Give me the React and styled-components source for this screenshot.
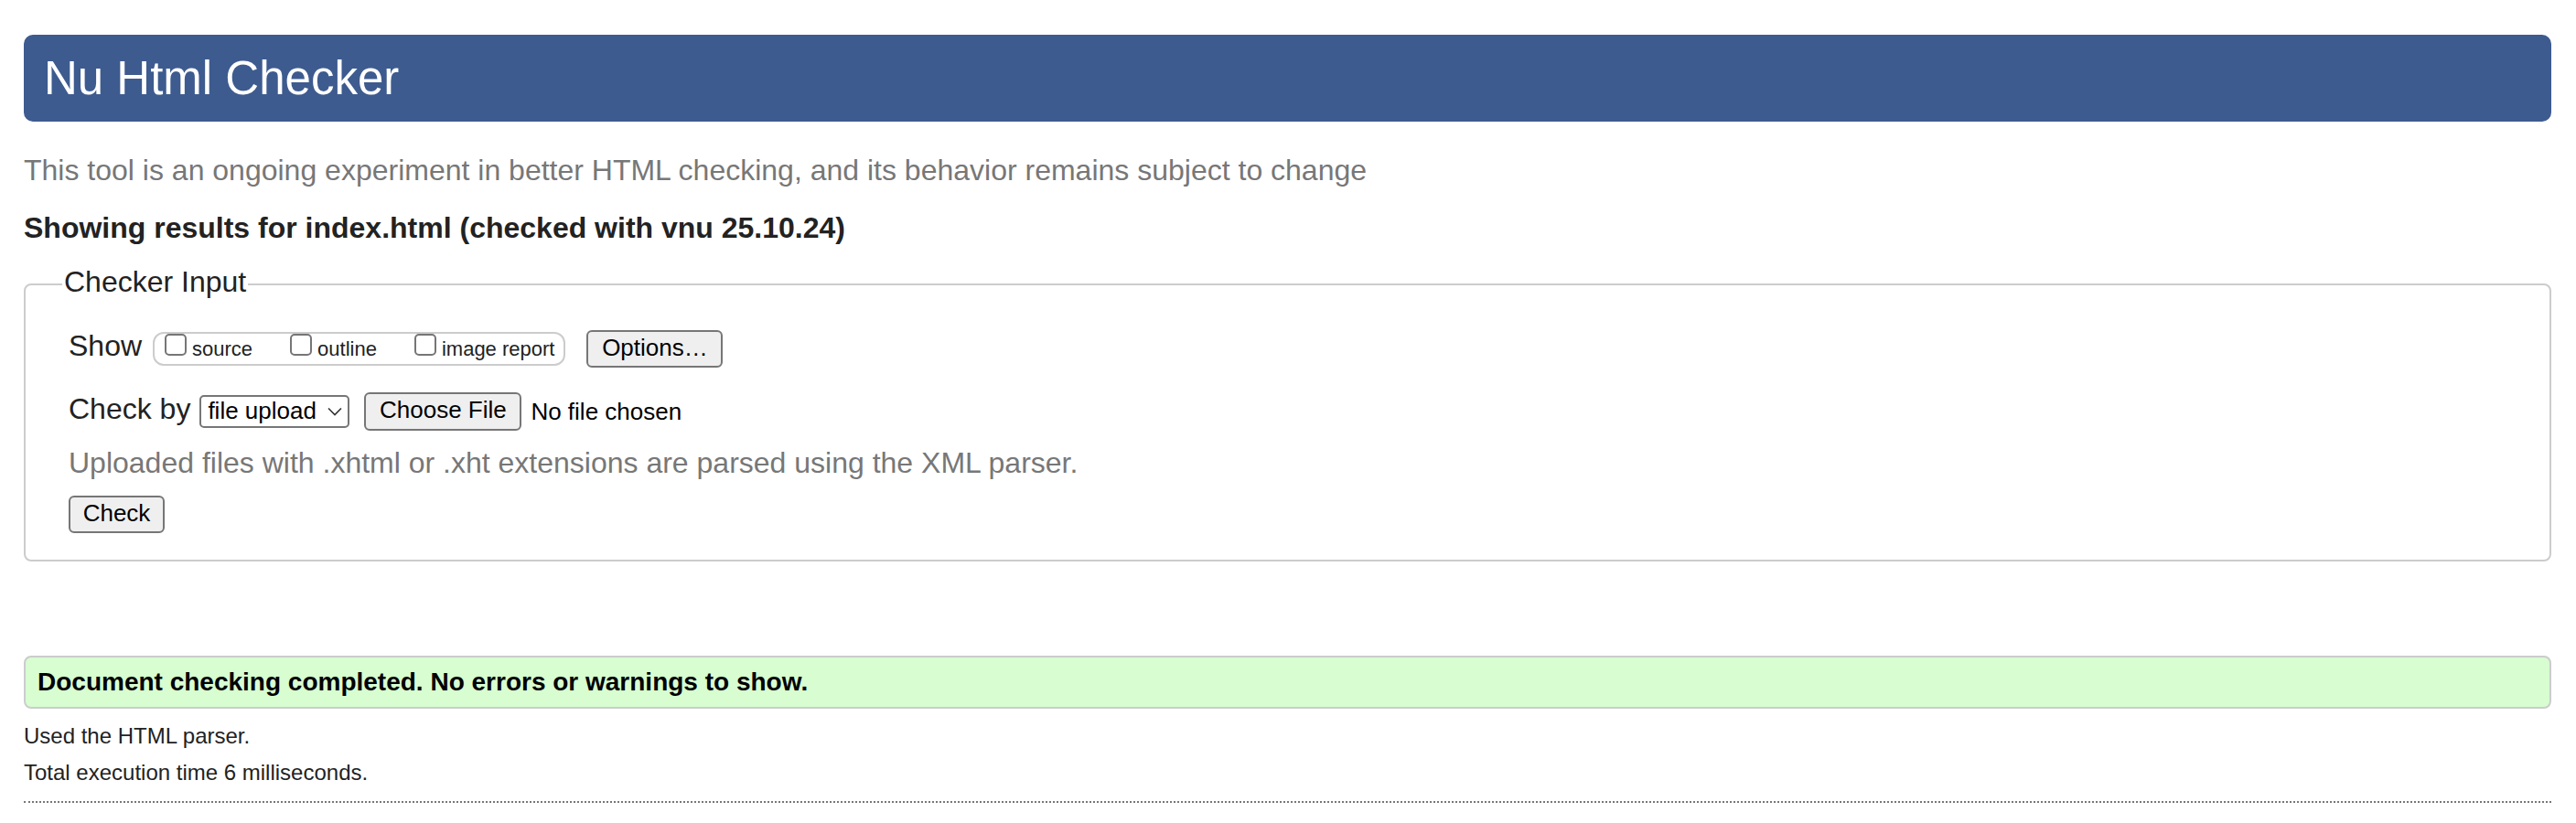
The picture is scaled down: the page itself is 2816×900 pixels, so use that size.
import React from 'react';
import styled, { createGlobalStyle } from 'styled-components';

const GlobalStyle = createGlobalStyle`
  html, body {
    margin: 0;
    padding: 0;
    background: #ffffff;
  }
  body {
    font-family: "Liberation Sans", Arial, Helvetica, sans-serif;
    color: #222222;
  }
`;

const Page = styled.div`
  padding: 38px 27px 0 26px;
`;

const Banner = styled.header`
  display: flex;
  align-items: center;
  height: 95px;
  padding-left: 22px;
  background-color: #3d5b8f;
  border-radius: 10px;
  color: #ffffff;
  font-size: 51px;
`;

const Intro = styled.p`
  margin: 33px 0 0;
  font-size: 32px;
  line-height: 40px;
  color: #777777;
`;

const ResultsFor = styled.h2`
  margin: 23px 0 0;
  font-size: 32px;
  line-height: 40px;
  font-weight: bold;
  color: #222222;
`;

const InputSet = styled.fieldset`
  margin: 19px 0 0;
  padding: 0 40px 29px;
  border: 2px solid #cccccc;
  border-radius: 8px;
  min-width: 0;
`;

const Legend = styled.legend`
  padding: 0 2px 6px;
  font-size: 32px;
  line-height: 40px;
  color: #222222;
`;

const Body = styled.div`
  padding-left: 7px;
`;

const Row = styled.div`
  display: flex;
  align-items: flex-start;
  margin-top: ${({ gap }) => gap}px;
  height: ${({ h }) => h}px;
`;

const RowLabel = styled.span`
  font-size: 32px;
  line-height: 34px;
  margin-top: ${({ nudge = 0 }) => nudge}px;
  margin-right: ${({ space = 10 }) => space}px;
  white-space: nowrap;
`;

const Pill = styled.div`
  display: flex;
  align-items: flex-start;
  box-sizing: border-box;
  height: 37px;
  margin-top: 2px;
  padding: 0 10px 0 11px;
  border: 2px solid #cccccc;
  border-radius: 12px;
`;

const Choice = styled.label`
  display: flex;
  align-items: flex-start;
  margin-right: ${({ last }) => (last ? 0 : 41)}px;
`;

const Box = styled.span`
  display: block;
  box-sizing: border-box;
  width: 24px;
  height: 24px;
  border: 2px solid #767676;
  border-radius: 5px;
  background: #ffffff;
`;

const ChoiceText = styled.span`
  margin: 5px 0 0 6px;
  font-size: 22px;
  line-height: 24px;
  color: #222222;
  white-space: nowrap;
`;

const Button = styled.button`
  box-sizing: border-box;
  height: ${({ h = 41 }) => h}px;
  width: ${({ w }) => w}px;
  margin: ${({ m = '0' }) => m};
  padding: 0 0 3px;
  border: 2px solid #767676;
  border-radius: 6px;
  background: #efefef;
  font-family: "Liberation Sans", Arial, Helvetica, sans-serif;
  font-size: 26px;
  color: #000000;
  white-space: nowrap;
`;

const Select = styled.div`
  display: flex;
  align-items: center;
  justify-content: space-between;
  box-sizing: border-box;
  width: 164px;
  height: 36px;
  margin-top: 3px;
  padding: 0 6px 2px 7px;
  border: 2px solid #767676;
  border-radius: 5px;
  background: #ffffff;
  font-size: 26px;
  color: #000000;
`;

const Chevron = () => (
  <svg width="16" height="10" viewBox="0 0 16 10" style={{ marginTop: 2 }}>
    <polyline points="1,1.5 8,8.5 15,1.5" fill="none" stroke="#333" strokeWidth="1.6" />
  </svg>
);

const FileNote = styled.span`
  margin-left: 10px;
  font-size: 26px;
  line-height: 42px;
  color: #000000;
  white-space: nowrap;
`;

const Hint = styled.p`
  margin: 15px 0 0;
  font-size: 32px;
  line-height: 40px;
  color: #777777;
`;

const Success = styled.div`
  display: flex;
  align-items: center;
  box-sizing: border-box;
  height: 58px;
  margin-top: 103px;
  padding: 0 13px;
  border: 2px solid #cccccc;
  border-radius: 8px;
  background: #d7fdd1;
  font-size: 28px;
  font-weight: bold;
  color: #000000;
`;

const Stats = styled.div`
  margin-top: 10px;
  font-size: 24px;
  line-height: 40px;
  color: #222222;
`;

const Rule = styled.hr`
  margin: 11px 0 0;
  border: 0;
  border-top: 2px dotted #777777;
  height: 0;
`;

const choices = ['source', 'outline', 'image report'];

export default function App() {
  return (
    <>
      <GlobalStyle />
      <Page>
        <Banner>Nu Html Checker</Banner>
        <Intro>
          This tool is an ongoing experiment in better HTML checking, and its behavior remains subject to change
        </Intro>
        <ResultsFor>Showing results for index.html (checked with vnu 25.10.24)</ResultsFor>
        <InputSet>
          <Legend>Checker Input</Legend>
          <Body>
            <Row gap={27} h={41}>
              <RowLabel space={12}>Show</RowLabel>
              <Pill>
                {choices.map((c, i) => (
                  <Choice key={c} last={i === choices.length - 1}>
                    <Box />
                    <ChoiceText>{c}</ChoiceText>
                  </Choice>
                ))}
              </Pill>
              <Button w={149} m="0 0 0 23px">Options…</Button>
            </Row>
            <Row gap={27} h={42}>
              <RowLabel nudge={1} space={10}>Check by</RowLabel>
              <Select>
                <span>file upload</span>
                <Chevron />
              </Select>
              <Button w={172} h={42} m="0 0 0 16px">Choose File</Button>
              <FileNote>No file chosen</FileNote>
            </Row>
            <Hint>Uploaded files with .xhtml or .xht extensions are parsed using the XML parser.</Hint>
            <Row gap={16} h={41}>
              <Button w={105}>Check</Button>
            </Row>
          </Body>
        </InputSet>
        <Success>Document checking completed. No errors or warnings to show.</Success>
        <Stats>
          <div>Used the HTML parser.</div>
          <div>Total execution time 6 milliseconds.</div>
        </Stats>
        <Rule />
      </Page>
    </>
  );
}
